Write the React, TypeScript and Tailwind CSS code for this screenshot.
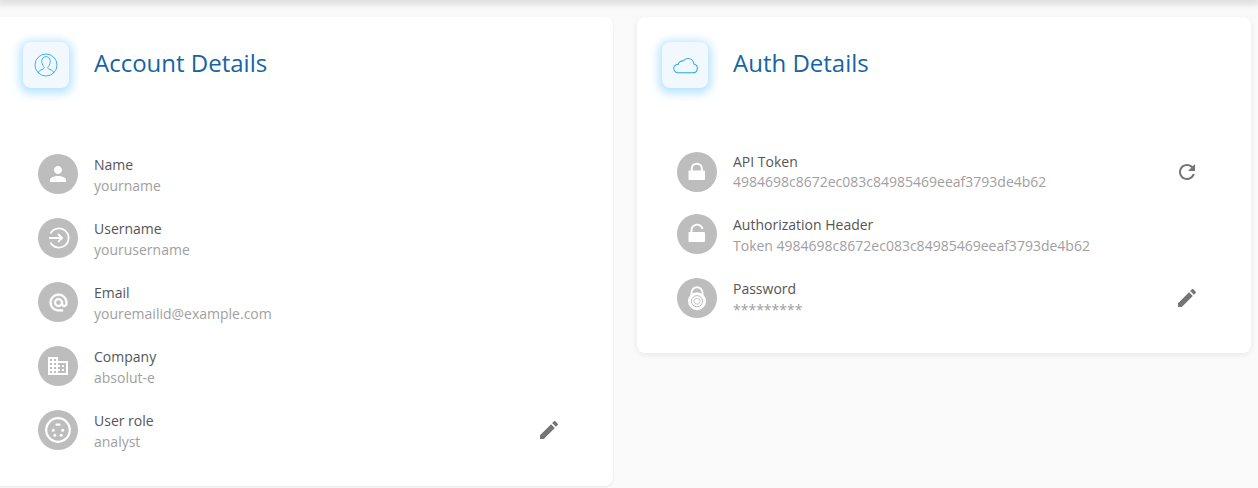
import React from "react";

const P = ({ d, className = "" }: { d: string; className?: string }) => (
  <svg viewBox="0 0 24 24" className={className} fill="currentColor"><path d={d} /></svg>
);

const paths = {
  person: "M12 12c2.21 0 4-1.79 4-4s-1.79-4-4-4-4 1.79-4 4 1.79 4 4 4zm0 2c-2.67 0-8 1.34-8 4v2h16v-2c0-2.66-5.33-4-8-4z",
  at: "M12 2C6.48 2 2 6.48 2 12s4.48 10 10 10h5v-2h-5c-4.34 0-8-3.66-8-8s3.66-8 8-8 8 3.66 8 8v1.43c0 .79-.71 1.57-1.5 1.57s-1.5-.78-1.5-1.57V12c0-2.76-2.24-5-5-5s-5 2.24-5 5 2.24 5 5 5c1.38 0 2.64-.56 3.54-1.47.65.89 1.77 1.47 2.96 1.47 1.97 0 3.5-1.6 3.5-3.57V12c0-5.52-4.48-10-10-10zm0 13c-1.66 0-3-1.34-3-3s1.34-3 3-3 3 1.34 3 3-1.34 3-3 3z",
  business: "M12 7V3H2v18h20V7H12zM6 19H4v-2h2v2zm0-4H4v-2h2v2zm0-4H4V9h2v2zm0-4H4V5h2v2zm4 12H8v-2h2v2zm0-4H8v-2h2v2zm0-4H8V9h2v2zm0-4H8V5h2v2zm10 12h-8v-2h2v-2h-2v-2h2v-2h-2V9h8v10zm-2-8h-2v2h2v-2zm0 4h-2v2h2v-2z",
  edit: "M3 17.25V21h3.75L17.81 9.94l-3.75-3.75L3 17.25zM20.71 7.04c.39-.39.39-1.02 0-1.41l-2.34-2.34c-.39-.39-1.02-.39-1.41 0l-1.83 1.83 3.75 3.75 1.83-1.83z",
  refresh: "M17.65 6.35C16.2 4.9 14.21 4 12 4c-4.42 0-7.99 3.58-7.99 8s3.57 8 7.99 8c3.73 0 6.84-2.55 7.73-6h-2.08c-.82 2.33-3.04 4-5.65 4-3.31 0-6-2.69-6-6s2.69-6 6-6c1.66 0 3.14.69 4.22 1.78L13 11h7V4l-2.35 2.35z",
};

const AtIcon = () => (
  <svg viewBox="0 0 24 24" className="w-[21px] h-[21px]" fill="currentColor" stroke="currentColor" strokeWidth="0.7">
    <path d={paths.at} />
  </svg>
);

const LoginIcon = () => (
  <svg viewBox="0 0 40 40" className="w-10 h-10" fill="none" stroke="currentColor" strokeWidth="1.8">
    <path d="M12.500 15.500A9.600 9.600 0 1 1 12.500 24.500" />
    <path d="M11 20h13M20 16l4 4-4 4" />
  </svg>
);

const LockClosed = () => (
  <svg viewBox="0 0 40 40" className="w-10 h-10">
    <rect x="11.500" y="18.500" width="16.500" height="9.500" rx="0.8" fill="currentColor" />
    <path d="M14.800 19v-2.800a5 4.500 0 0 1 10 0V19" fill="none" stroke="currentColor" strokeWidth="1.900" />
  </svg>
);

const LockOpen = () => (
  <svg viewBox="0 0 40 40" className="w-10 h-10">
    <rect x="11.500" y="18" width="16.500" height="10" rx="0.8" fill="currentColor" />
    <path d="M14.500 18.500v-2.300a5.500 5 0 0 1 11-1" fill="none" stroke="currentColor" strokeWidth="1.900" />
  </svg>
);

const SvideoIcon = () => (
  <svg viewBox="0 0 40 40" className="w-10 h-10" fill="currentColor">
    <circle cx="20" cy="20" r="11.800" fill="none" stroke="currentColor" strokeWidth="2.200" />
    <rect x="17.500" y="13.500" width="5" height="2.200" rx="0.6" />
    <circle cx="15.300" cy="20.300" r="1.500" />
    <circle cx="24.700" cy="20.300" r="1.500" />
    <circle cx="16.800" cy="25.200" r="1.500" />
    <circle cx="23.200" cy="25.200" r="1.500" />
  </svg>
);

const ComboLock = () => (
  <svg viewBox="0 0 40 40" className="w-10 h-10">
    <path d="M14.500 18v-3.200a5.500 5.500 0 0 1 11 0V18" fill="none" stroke="currentColor" strokeWidth="1.900" />
    <circle cx="20" cy="23.200" r="9" fill="currentColor" />
    <circle cx="20" cy="23.200" r="5.600" fill="none" stroke="#bdbdbd" strokeWidth="1" />
    <circle cx="20" cy="23.200" r="3" fill="none" stroke="#bdbdbd" strokeWidth="0.8" />
  </svg>
);

const AccountLine = () => (
  <svg viewBox="0 0 24 24" className="w-6 h-6" fill="none" stroke="#29a9ec" strokeWidth="0.9">
    <circle cx="12" cy="12" r="11" />
    <path d="M4.500 20c.3-2.100 1.600-2.900 3.500-3.500 1.500-.5 2.200-1 2.200-1.900 0-.8-.9-1.300-1.500-2.600-.7-1.500-1.100-2.900-.9-4.500C8.100 5.200 9.800 3.700 12 3.700s3.900 1.500 4.200 3.800c.2 1.600-.2 3-.9 4.500-.6 1.300-1.500 1.800-1.500 2.600 0 .9.700 1.400 2.200 1.900 1.900.6 3.200 1.400 3.500 3.500" />
  </svg>
);

const CloudLine = () => (
  <svg viewBox="0 0 24 24" className="w-[27px] h-[27px]" fill="none" stroke="#29a9ec" strokeWidth="0.9">
    <path d="M6.300 18.500h12.200a4 4 0 0 0 .9-7.900 5.200 5.200 0 0 0-5.200-4.900c-1.800 0-3.300.9-4.200 2.300a3.500 3.500 0 0 0-4.300 2.900A3.900 3.900 0 0 0 1.500 14.500a4.200 4.200 0 0 0 4.800 4z" />
  </svg>
);

const Badge = ({ children }: { children: React.ReactNode }) => (
  <div className="w-[46px] h-[46px] rounded-lg bg-[#f1f8fe] flex items-center justify-center shadow-[0_2px_10px_3px_rgba(66,180,250,0.4)]">
    {children}
  </div>
);

type RowProps = {
  icon: React.ReactNode;
  label: string;
  value: string;
  action?: string;
  rowClass: string;
  labelClass: string;
  valueClass: string;
};

const Row = ({ icon, label, value, action, rowClass, labelClass, valueClass }: RowProps) => (
  <div className={`flex items-center h-10 ${rowClass}`}>
    <div className="w-10 h-10 rounded-full bg-[#bdbdbd] text-white flex items-center justify-center shrink-0">
      {icon}
    </div>
    <div className="ml-4 flex-1 min-w-0 self-start">
      <div className={`text-[14px] leading-[20px] text-[#555555] ${labelClass}`}>{label}</div>
      <div className={`text-[14px] leading-[20px] text-[#a0a0a0] ${valueClass}`}>{value}</div>
    </div>
    {action && <P d={action} className="w-6 h-6 text-[#757575]" />}
  </div>
);

const Header = ({ icon, title }: { icon: React.ReactNode; title: string }) => (
  <div className="flex items-start">
    <Badge>{icon}</Badge>
    <h2 className="ml-[25px] text-[24px] leading-[42px] font-normal text-[#1565a5]">{title}</h2>
  </div>
);

export default function App() {
  const token = "4984698c8672ec083c84985469eeaf3793de4b62";
  const L = "mt-px";
  const V = "mt-px";
  return (
    <div className="h-[488px] bg-[#fafafa] overflow-hidden font-['Open_Sans','Liberation_Sans',sans-serif]">
      <div className="h-px -mt-px shadow-[0_1px_7px_3px_rgba(0,0,0,0.14)]" />
      <div className="flex items-start gap-6 pt-[17px]">
        <section className="w-[613px] h-[469px] bg-white rounded-r-lg shadow-[0_1px_3px_rgba(0,0,0,0.08)] pt-[25px] pl-[23px]">
          <Header icon={<AccountLine />} title="Account Details" />
          <div className="mt-[66px] ml-[15px] mr-[52px]">
            <Row rowClass="mb-6" labelClass={L} valueClass={V} icon={<P d={paths.person} className="w-6 h-6" />} label="Name" value="yourname" />
            <Row rowClass="mb-6" labelClass={L} valueClass={V} icon={<LoginIcon />} label="Username" value="yourusername" />
            <Row rowClass="mb-6" labelClass={L} valueClass={V} icon={<AtIcon />} label="Email" value="youremailid@example.com" />
            <Row rowClass="mb-6" labelClass={L} valueClass={V} icon={<P d={paths.business} className="w-6 h-6" />} label="Company" value="absolut-e" />
            <Row rowClass="" labelClass={L} valueClass={V} icon={<SvideoIcon />} label="User role" value="analyst" action={paths.edit} />
          </div>
        </section>
        <section className="w-[614px] h-[336px] bg-white rounded-lg shadow-[0_2px_6px_rgba(0,0,0,0.08)] pt-[25px] pl-[25px]">
          <Header icon={<CloudLine />} title="Auth Details" />
          <div className="mt-[64px] ml-[15px] mr-[52px]">
            <Row rowClass="mb-[22px]" labelClass="" valueClass="" icon={<LockClosed />} label="API Token" value={token} action={paths.refresh} />
            <Row rowClass="mb-6" labelClass={L} valueClass={V} icon={<LockOpen />} label="Authorization Header" value={`Token ${token}`} />
            <Row rowClass="" labelClass={L} valueClass={V} icon={<ComboLock />} label="Password" value="*********" action={paths.edit} />
          </div>
        </section>
      </div>
    </div>
  );
}
